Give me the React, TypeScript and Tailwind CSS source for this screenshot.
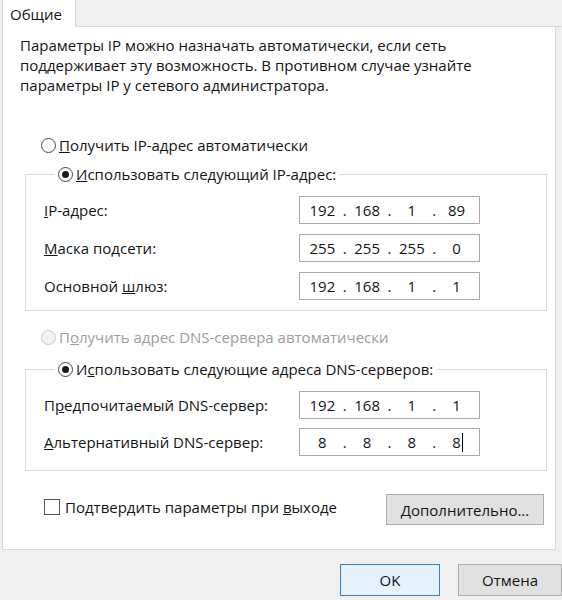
import React from "react";

type Octets = [string, string, string, string];

function Radio({ checked = false, disabled = false }: { checked?: boolean; disabled?: boolean }) {
  return (
    <span
      className={`flex h-[15px] w-[15px] shrink-0 items-center justify-center rounded-full border ${
        disabled ? "border-[#c8c8c8] bg-[#f2f2f2]" : "border-[#444] bg-white"
      }`}
    >
      {checked && <span className="h-[7px] w-[7px] rounded-full bg-[#1a1a1a]" />}
    </span>
  );
}

function IpBox({ value, caret = false }: { value: Octets; caret?: boolean }) {
  return (
    <div className="flex h-[28px] w-[181px] items-center border border-[#a9a9a9] bg-white">
      {value.map((o, i) => (
        <React.Fragment key={i}>
          <span className="relative w-[45px] text-center">
            {o}
            {caret && i === 3 && (
              <span className="absolute top-[1px] ml-[1px] h-[19px] w-px bg-black" />
            )}
          </span>
          {i < 3 && <span className="flex w-0 justify-center">.</span>}
        </React.Fragment>
      ))}
    </div>
  );
}

function Field({ label, value, caret }: { label: React.ReactNode; value: Octets; caret?: boolean }) {
  return (
    <div className="flex items-center justify-between">
      <span>{label}</span>
      <IpBox value={value} caret={caret} />
    </div>
  );
}

export default function App() {
  return (
    <div
      className="relative h-[600px] w-[562px] overflow-hidden bg-[#f0f0f0] text-[15px] leading-[20px] text-[#141414]"
      style={{ fontFamily: '"Open Sans", "Noto Sans", sans-serif' }}
    >
      {/* tabs */}
      <div className="flex h-[27px]">
        <div className="ml-[2px] flex w-[74px] items-center border-l border-r border-[#d9d9d9] bg-white pl-[7px]">
          Общие
        </div>
        <div className="flex-1 border-b border-[#d9d9d9]" />
      </div>

      {/* panel */}
      <div className="ml-[2px] h-[523px] w-[554px] border-b border-l border-r border-[#d9d9d9] bg-white">
        <p className="pl-[17px] pt-[8px]">
          Параметры IP можно назначать автоматически, если сеть
          <br />
          поддерживает эту возможность. В противном случае узнайте
          <br />
          параметры IP у сетевого администратора.
        </p>

        <div className="ml-[38px] mt-[40px] flex items-center gap-[3px]">
          <Radio />
          <span>
            <u>П</u>олучить IP-адрес автоматически
          </span>
        </div>

        <fieldset className="ml-[22px] mt-[9px] w-[522px] border border-[#dcdcdc] px-[18px] pb-[10px]">
          <legend className="ml-[11px] flex items-center gap-[3px] bg-white px-[3px]">
            <Radio checked />
            <span>
              <u>И</u>спользовать следующий IP-адрес:
            </span>
          </legend>
          <div className="mr-[48px] mt-[12px] flex flex-col gap-[10px]">
            <Field label={<><u>I</u>P-адрес:</>} value={["192", "168", "1", "89"]} />
            <Field label={<><u>М</u>аска подсети:</>} value={["255", "255", "255", "0"]} />
            <Field label={<>Основной <u>ш</u>люз:</>} value={["192", "168", "1", "1"]} />
          </div>
        </fieldset>

        <div className="ml-[38px] mt-[16px] flex items-center gap-[3px] text-[#9d9d9d]">
          <Radio disabled />
          <span>
            П<u>о</u>лучить адрес DNS-сервера автоматически
          </span>
        </div>

        <fieldset className="ml-[22px] mt-[12px] w-[522px] border border-[#dcdcdc] px-[18px] pb-[14px]">
          <legend className="ml-[11px] flex items-center gap-[3px] bg-white px-[3px]">
            <Radio checked />
            <span>
              И<u>с</u>пользовать следующие адреса DNS-серверов:
            </span>
          </legend>
          <div className="mr-[48px] mt-[12px] flex flex-col gap-[9px]">
            <Field label={<>П<u>р</u>едпочитаемый DNS-сервер:</>} value={["192", "168", "1", "1"]} />
            <Field label={<><u>А</u>льтернативный DNS-сервер:</>} value={["8", "8", "8", "8"]} caret />
          </div>
        </fieldset>

        <div className="ml-[41px] mt-[23px] flex items-center">
          <div className="-mt-[6px] flex items-center gap-[5px]">
            <span className="h-[16px] w-[16px] border border-[#555] bg-white" />
            <span>
              Подтвердить параметры при <u>в</u>ыходе
            </span>
          </div>
          <button className="ml-auto mr-[11px] h-[31px] w-[158px] border border-[#adadad] bg-[#e1e1e1]">
            <u>Д</u>ополнительно...
          </button>
        </div>
      </div>

      {/* footer buttons */}
      <div className="mt-[14px] flex justify-end gap-[18px]">
        <button className="h-[32px] w-[100px] border border-[#3c7fb1] bg-[#e5f1fb]">OK</button>
        <button className="h-[32px] w-[104px] border border-[#adadad] bg-[#e1e1e1]">Отмена</button>
      </div>
    </div>
  );
}
